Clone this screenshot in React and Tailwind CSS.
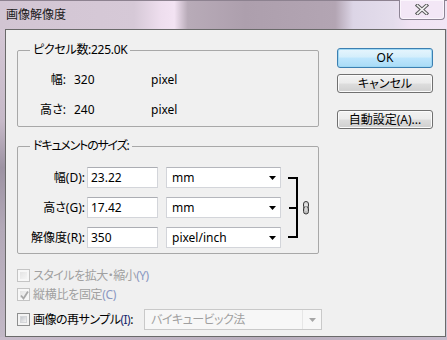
const font = "font-['Noto_Sans','Noto_Sans_CJK_JP',sans-serif] [font-feature-settings:'palt']";

function Arrow({ color = '#000' }) {
  return (
    <svg width="7" height="4" viewBox="0 0 7 4">
      <polygon points="0,0 7,0 3.5,4" fill={color} />
    </svg>
  );
}

function Button({ children, primary, className = '' }) {
  const skin = primary
    ? 'border-[#3c7fb1] bg-[linear-gradient(to_bottom,#e6f5fd_0%,#d4eefb_45%,#bee6fd_50%,#a9dbf6_100%)] shadow-[inset_0_0_0_1px_#9fd8f4]'
    : 'border-[#707070] bg-[linear-gradient(to_bottom,#f2f2f2_0%,#ebebeb_48%,#dddddd_52%,#cfcfcf_100%)] shadow-[inset_0_0_0_1px_#fbfbfb]';
  return (
    <div className={`w-[96px] flex items-center justify-center border rounded-[3px] text-[12px] leading-none text-black ${skin} ${className}`}>
      {children}
    </div>
  );
}

function Checkbox({ checked, disabled }) {
  return (
    <div
      className={`w-[13px] h-[13px] border p-[2px] flex items-center justify-center ${
        disabled ? 'border-[#c4c4c4] bg-[#f7f7f7]' : 'border-[#8e8f8f] bg-[#f4f4f4]'
      }`}
    >
      <div
        className={`w-full h-full relative ${
          disabled
            ? 'bg-[linear-gradient(135deg,#e4e4e4,#f5f5f5)]'
            : 'bg-[linear-gradient(135deg,#c5c8cd,#f3f3f3)] border border-[#d4d6d9]'
        }`}
      >
        {checked && (
          <svg className="absolute -left-[1px] -top-[1px]" width="11" height="11" viewBox="0 0 11 11">
            <path d="M2 5.5 L4.5 8.5 L9 1.5" stroke="#a8a8a8" strokeWidth="1.8" fill="none" />
          </svg>
        )}
      </div>
    </div>
  );
}

function TextBox({ value }) {
  return (
    <div className="w-[71px] h-[21px] bg-white border border-[#d3d5da] border-t-[#abadb3] pl-[3px] flex items-center text-[12px] text-black">
      {value}
    </div>
  );
}

function Select({ value }) {
  return (
    <div className="w-[115px] h-[21px] bg-white border border-[#d3d5da] border-t-[#b4b6bc] pl-[5px] pr-[4px] flex items-center justify-between text-[12px] text-black">
      <span>{value}</span>
      <Arrow />
    </div>
  );
}

function DocRow({ label, value, unit }) {
  return (
    <div className="flex items-center h-[21px]">
      <div className="w-[67px] text-right text-[12px] text-black whitespace-nowrap">{label}</div>
      <div className="ml-[2px]">
        <TextBox value={value} />
      </div>
      <div className="ml-[8px]">
        <Select value={unit} />
      </div>
    </div>
  );
}

function CloseGlyph() {
  return (
    <svg width="14" height="11" viewBox="0 0 14 11">
      <path d="M2.5 1.5 L11.5 9.5 M11.5 1.5 L2.5 9.5" stroke="#5a5a5a" strokeWidth="3.6" strokeLinecap="square" fill="none" />
      <path d="M2.5 1.5 L11.5 9.5 M11.5 1.5 L2.5 9.5" stroke="#f4f4f4" strokeWidth="1.6" strokeLinecap="square" fill="none" />
    </svg>
  );
}

export default function App() {
  return (
    <div className={`w-[447px] h-[340px] overflow-hidden flex flex-col bg-[linear-gradient(90deg,#c8bccb_0%,#beb3c2_40%,#b7acbb_60%,#c6bccd_100%)] ${font}`}>
      {/* title bar */}
      <div className="h-[29px] shrink-0 flex items-start border-t border-[#8d8290] bg-[linear-gradient(90deg,#d2c5d3_0%,#d6c9d7_30%,#eedeee_36%,#f3e3f3_39%,#b8abb8_42%,#ad9fad_55%,#b3a5b3_75%,#dcd5e6_79%,#e4ddec_88%,#f1e3f4_92%,#f2e6f5_100%)]">
        <div className="pl-[6px] pt-[6px] text-[12px] leading-[16px] text-[#1b1b1b]">画像解像度</div>
        <div className="ml-auto mr-[2px] -mt-px w-[46px] h-[20px] flex items-center justify-center border border-t-0 border-[#8c8494] rounded-b-[4px] bg-[#f3e7f6] shadow-[inset_0_0_0_1px_#fbf5fc]">
          <CloseGlyph />
        </div>
      </div>

      <div className="flex h-[308px] shrink-0">
        <div className="w-[5px] shrink-0 bg-[linear-gradient(to_bottom,#d4c7d5_0%,#c6b9c8_30%,#9d93a3_45%,#b3a9b8_65%,#c2b8c6_100%)]" />
        {/* client area */}
        <div className="w-[441px] shrink-0 border border-[#6a6a6a] bg-[#f0f0f0] pt-[12px] pl-[11px] flex">
          <div className="w-[305px] shrink-0 flex flex-col">
            <fieldset className="w-[302px] border border-[#a8a8a8] rounded-[2px] pb-[8px]">
              <legend className="ml-[12px] px-[3px] text-[12px] leading-[16px] text-black tracking-[-0.3px]">ピクセル数:225.0K</legend>
              <div className="pt-[14px] flex flex-col gap-[14px] text-[12px] text-black">
                <div className="flex items-center h-[16px]">
                  <div className="w-[48px] text-right">幅:</div>
                  <div className="ml-[8px] w-[77px]">320</div>
                  <div>pixel</div>
                </div>
                <div className="flex items-center h-[16px]">
                  <div className="w-[48px] text-right">高さ:</div>
                  <div className="ml-[8px] w-[77px]">240</div>
                  <div>pixel</div>
                </div>
              </div>
            </fieldset>

            <fieldset className="mt-[11px] w-[302px] border border-[#a8a8a8] rounded-[2px] pb-[5px]">
              <legend className="ml-[12px] px-[3px] text-[12px] leading-[16px] text-black tracking-[-1.2px]">ドキュメントのサイズ:</legend>
              <div className="pt-[13px] flex items-start">
                <div className="flex flex-col gap-[9px]">
                  <DocRow label="幅(D):" value="23.22" unit="mm" />
                  <DocRow label="高さ(G):" value="17.42" unit="mm" />
                  <DocRow label="解像度(R):" value="350" unit="pixel/inch" />
                </div>
                <svg width="30" height="81" viewBox="0 0 30 81" className="shrink-0">
                  <rect x="15" y="10" width="2" height="61" fill="#000" />
                  <rect x="7" y="10" width="10" height="2" fill="#000" />
                  <rect x="8" y="40" width="9" height="2" fill="#000" />
                  <rect x="7" y="69" width="10" height="2" fill="#000" />
                  <rect x="22.5" y="34.5" width="5" height="7.5" rx="2.5" fill="#d8d8d8" stroke="#3a3a3a" strokeWidth="1" />
                  <rect x="22.5" y="39.5" width="5" height="7.5" rx="2.5" fill="#bdbdbd" stroke="#3a3a3a" strokeWidth="1" />
                  <rect x="24.5" y="37" width="1" height="7" fill="#f0f0f0" />
                </svg>
              </div>
            </fieldset>

            <div className="mt-[12px] h-[19px] flex items-center text-[12px]">
              <Checkbox disabled />
              <span className="ml-[3px] text-[#a0a0a0] tracking-[-0.5px]">
                スタイルを拡大・縮小<span className="text-[#8b98c2]">(Y)</span>
              </span>
            </div>
            <div className="h-[19px] flex items-center text-[12px]">
              <Checkbox disabled checked />
              <span className="ml-[3px] text-[#a0a0a0] tracking-[-0.3px]">
                縦横比を固定<span className="text-[#8b98c2]">(C)</span>
              </span>
            </div>
            <div className="mt-[5px] h-[21px] flex items-center text-[12px]">
              <Checkbox />
              <span className="ml-[3px] text-black whitespace-nowrap tracking-[-0.5px]">
                画像の再サンプル<span className="text-[#1c2a6e]">(I)</span>:
              </span>
              <div className="ml-auto w-[178px] h-[21px] border border-[#c9c9c9] bg-[#f7f7f7] flex items-center text-[#a0a0a0] tracking-[-0.5px]">
                <div className="flex-1 pl-[6px] h-full flex items-center border-r border-[#e6e6e6]">バイキュービック法</div>
                <div className="w-[18px] flex items-center justify-center">
                  <Arrow color="#a6a6a6" />
                </div>
              </div>
            </div>
          </div>

          <div className="ml-[15px] w-[96px] shrink-0 flex flex-col pt-[6px]">
            <Button primary className="h-[20px]">OK</Button>
            <Button className="mt-[6px] h-[19px]">キャンセル</Button>
            <Button className="mt-[17px] h-[19px]">自動設定(A)...</Button>
          </div>
        </div>
        <div className="flex-1 bg-[#cfc5d6]" />
      </div>
    </div>
  );
}
